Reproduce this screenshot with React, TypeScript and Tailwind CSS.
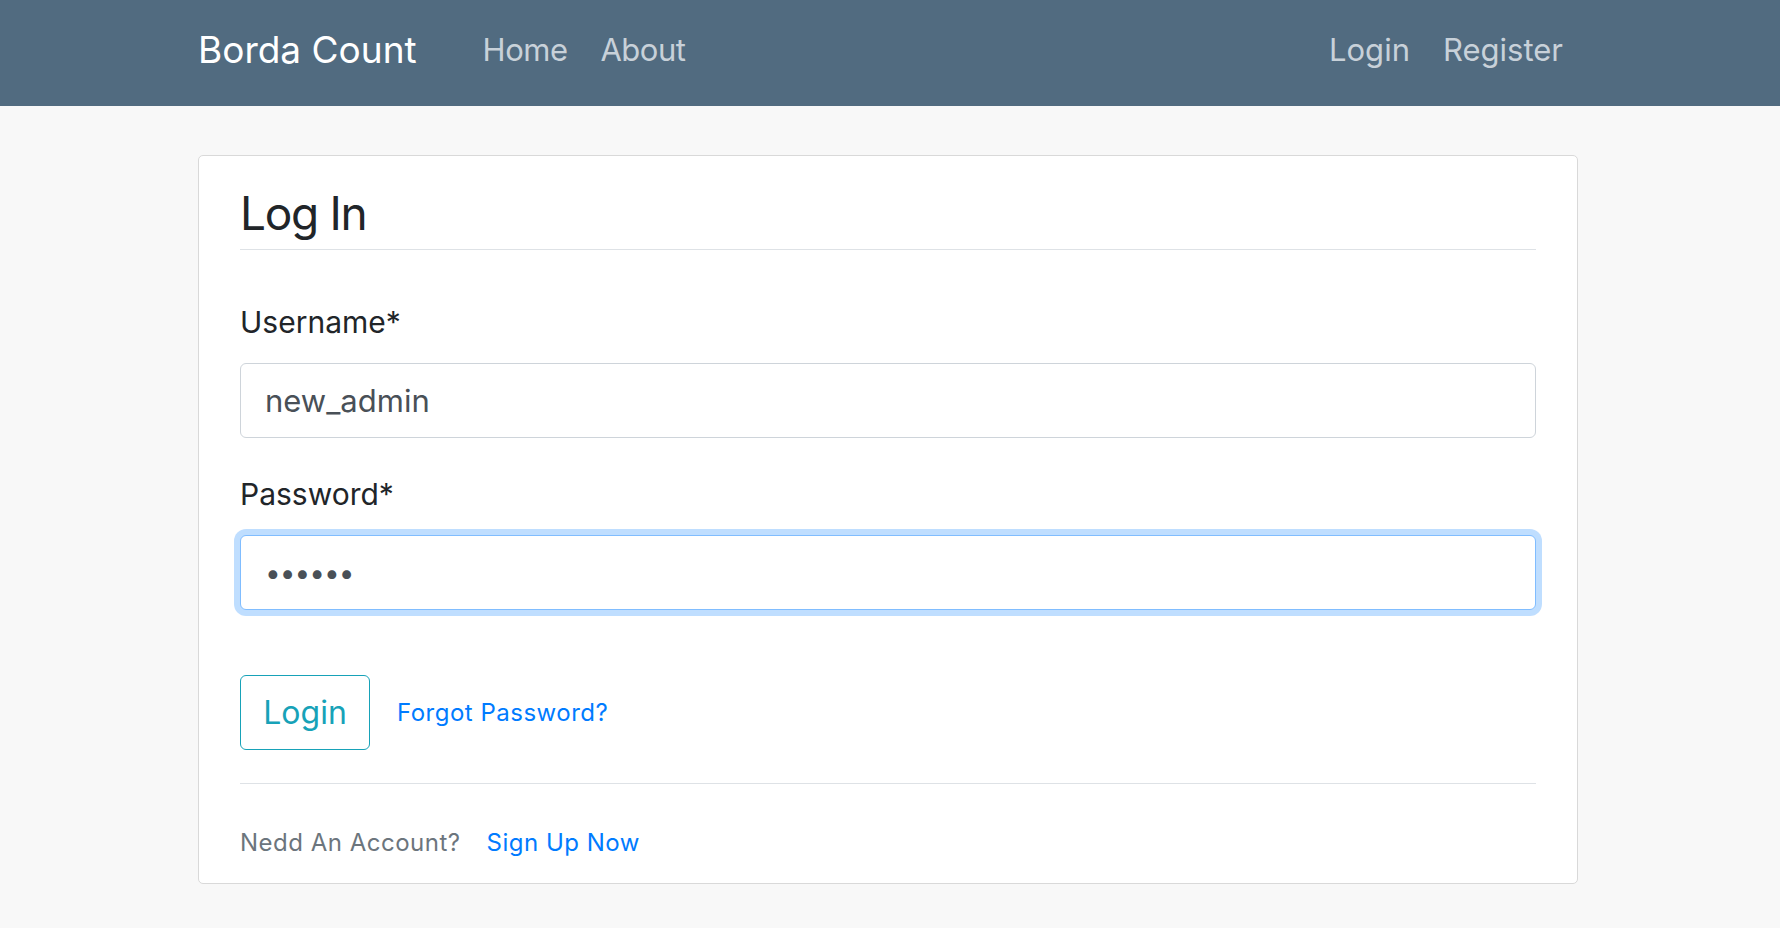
import { useState } from "react";

const font = { fontFamily: "Inter, 'Noto Sans', sans-serif" };

function Navbar() {
  return (
    <nav className="h-[106px] bg-[#516b80]">
      <div className="mx-auto flex h-full w-[1384px] items-center pb-[6px] pr-[4px]">
        <a href="#" className="text-[37px] leading-[44px] text-white">
          Borda Count
        </a>
        <ul className="ml-[66px] flex gap-[33px] text-[31px] leading-[40px] tracking-[-0.5px] text-[#c8d1d9]">
          <li>
            <a href="#">Home</a>
          </li>
          <li>
            <a href="#">About</a>
          </li>
        </ul>
        <ul className="ml-auto mr-[15px] flex gap-[33px] text-[31px] leading-[40px] text-[#c8d1d9]">
          <li>
            <a href="#">Login</a>
          </li>
          <li>
            <a href="#">Register</a>
          </li>
        </ul>
      </div>
    </nav>
  );
}

export default function App() {
  const [username, setUsername] = useState("new_admin");
  const [password, setPassword] = useState("123456");

  return (
    <div className="min-h-screen bg-[#f8f8f8]" style={font}>
      <Navbar />

      <main className="mx-auto w-[1384px] pr-[4px] pt-[49px]">
        <div className="rounded-[5px] border border-[#d9d9d9] bg-white px-[41px] pt-[28px] pb-[26px]">
          <h1 className="border-b border-[#dee2e6] pb-[7px] text-[46px] leading-[58px] tracking-[-1.3px] text-[#212529]">
            Log In
          </h1>

          <form onSubmit={(e) => e.preventDefault()}>
            <div className="mt-[54px]">
              <label className="block text-[30px] leading-[36px] text-[#212529]">
                Username*
              </label>
              <input
                type="text"
                value={username}
                onChange={(e) => setUsername(e.target.value)}
                className="mt-[23px] block h-[75px] w-full rounded-[6px] border border-[#ced4da] bg-white px-[24px] text-[31px] text-[#495057] outline-none"
              />
            </div>

            <div className="mt-[38px]">
              <label className="block text-[30px] leading-[36px] text-[#212529]">
                Password*
              </label>
              <input
                type="password"
                value={password}
                onChange={(e) => setPassword(e.target.value)}
                className="mt-[23px] block h-[75px] w-full rounded-[6px] border border-[#80bdff] bg-white px-[24px] text-[28px] tracking-[-1px] text-[#495057] shadow-[0_0_0_6px_rgba(0,123,255,0.25)] outline-none"
              />
            </div>

            <div className="mt-[65px] flex items-center">
              <button
                type="submit"
                className="flex h-[75px] w-[130px] items-center justify-center rounded-[6px] border border-[#17a2b8] text-[32px] text-[#17a2b8]"
              >
                Login
              </button>
              <a
                href="#"
                className="ml-[27px] text-[24px] leading-[30px] tracking-[0.5px] text-[#007bff]"
              >
                Forgot Password?
              </a>
            </div>
          </form>

          <div className="mt-[33px] border-t border-[#dee2e6] pt-[45px] text-[24px] leading-[28px] tracking-[0.5px]">
            <span className="text-[#6c757d]">Nedd An Account?</span>
            <a href="#" className="ml-[26px] text-[#007bff]">
              Sign Up Now
            </a>
          </div>
        </div>
      </main>
    </div>
  );
}
